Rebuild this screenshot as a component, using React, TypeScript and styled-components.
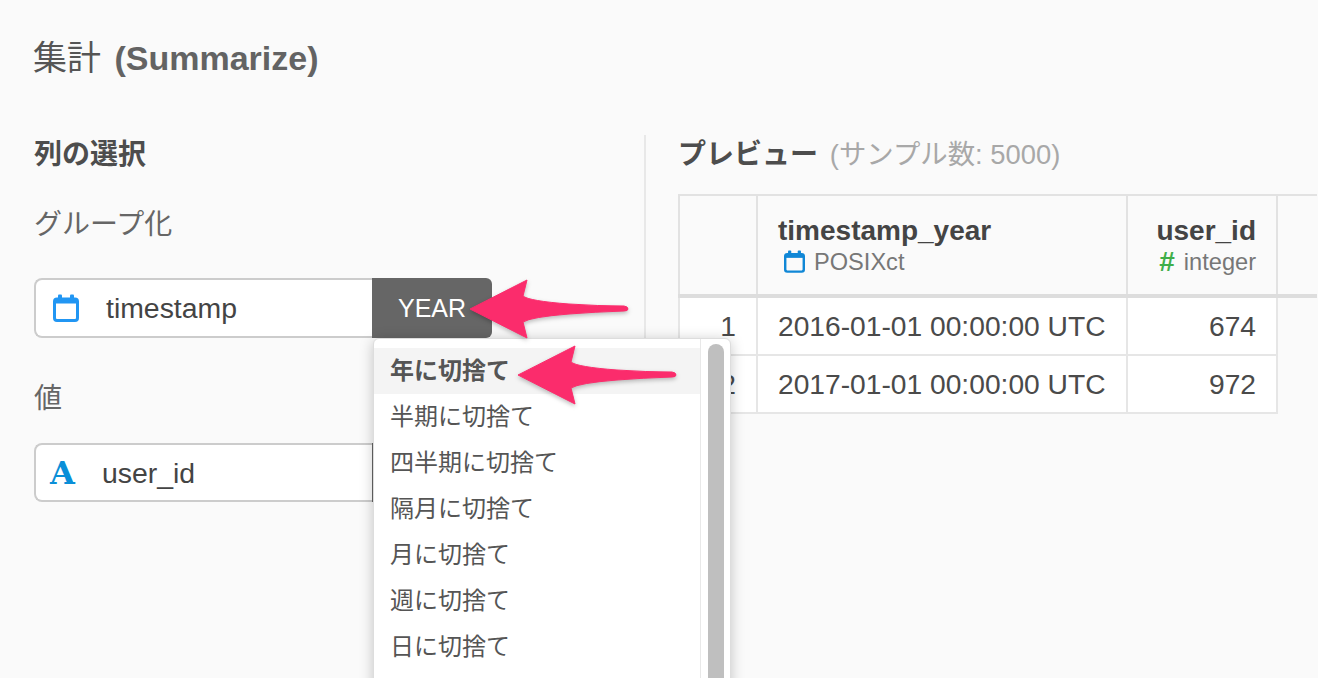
import React from 'react';
import styled, { createGlobalStyle } from 'styled-components';

const GlobalStyle = createGlobalStyle`
  html, body {
    margin: 0;
    padding: 0;
    background: #fafafa;
    font-family: 'Liberation Sans', 'Noto Sans CJK JP', sans-serif;
    color: #4a4a4a;
  }
`;

const roundings = ['年に切捨て', '半期に切捨て', '四半期に切捨て', '隔月に切捨て', '月に切捨て', '週に切捨て', '日に切捨て'];

function CalendarIcon(props: { size: number; color: string }) {
  return (
    <svg width={props.size} height={props.size + 2} viewBox="0 0 26 28" fill="none">
      <rect x="1.5" y="5" width="23" height="21.5" rx="2.5" stroke={props.color} strokeWidth="3" />
      <rect x="1.5" y="5" width="23" height="4.5" fill={props.color} />
      <rect x="5" y="0.5" width="4" height="6" rx="1" fill={props.color} />
      <rect x="17" y="0.5" width="4" height="6" rx="1" fill={props.color} />
    </svg>
  );
}

function App() {
  return (
    <Page>
      <GlobalStyle />
      <Header>
        <Title>
          集計 <strong>(Summarize)</strong>
        </Title>
      </Header>
      <Body>
        <LeftColumn>
          <SectionTitle>列の選択</SectionTitle>
          <Label $top={34}>グループ化</Label>
          <Field $top={37} $height={60} $raised>
            <FieldBox>
              <CalendarSlot>
                <CalendarIcon size={26} color="#2196f3" />
              </CalendarSlot>
              <FieldText>timestamp</FieldText>
            </FieldBox>
            <TypeButton>YEAR</TypeButton>
            <Dropdown>
              <Options>
                {roundings.map((item: string, index: number) => {
                  return (
                    <Option key={item} $active={index === 0}>
                      {item}
                    </Option>
                  );
                })}
              </Options>
              <Track>
                <Thumb />
              </Track>
            </Dropdown>
          </Field>
          <Label $top={41}>値</Label>
          <Field $top={28} $height={59}>
            <FieldBox>
              <LetterIcon>A</LetterIcon>
              <FieldText>user_id</FieldText>
            </FieldBox>
            <TypeButton />
          </Field>
        </LeftColumn>
        <RightColumn>
          <PreviewTitle>
            <strong>プレビュー</strong> <Muted>(サンプル数: 5000)</Muted>
          </PreviewTitle>
          <Table>
            <colgroup>
              <col width={78} />
              <col width={370} />
              <col width={150} />
              <col />
            </colgroup>
            <thead>
              <tr>
                <HeadCell />
                <HeadCell>
                  <ColumnName>timestamp_year</ColumnName>
                  <ColumnType>
                    <CalendarSlotSmall>
                      <CalendarIcon size={21} color="#1087d6" />
                    </CalendarSlotSmall>
                    POSIXct
                  </ColumnType>
                </HeadCell>
                <HeadCell $right>
                  <ColumnName>user_id</ColumnName>
                  <ColumnType $right>
                    <Hash>#</Hash>
                    integer
                  </ColumnType>
                </HeadCell>
                <HeadCell />
              </tr>
            </thead>
            <tbody>
              <tr>
                <BodyCell $right>1</BodyCell>
                <BodyCell>2016-01-01 00:00:00 UTC</BodyCell>
                <BodyCell $right>674</BodyCell>
              </tr>
              <tr>
                <BodyCell $right>2</BodyCell>
                <BodyCell>2017-01-01 00:00:00 UTC</BodyCell>
                <BodyCell $right>972</BodyCell>
              </tr>
            </tbody>
          </Table>
        </RightColumn>
      </Body>
      <Arrow $left={469} $top={279} />
      <Arrow $left={517} $top={345} />
    </Page>
  );
}

function Arrow(props: { $left: number; $top: number }) {
  return (
    <ArrowSvg $left={props.$left} $top={props.$top} viewBox="0 0 162 62" width={162} height={62}>
      <path
        d="M1 30 L58 1 L54 17 Q60 22 100 25 Q130 27 155 27 Q159 27.5 159 30 Q159 32 155 32 Q125 33 100 35 Q62 38 54 43 L58 59 Z"
        fill="#fb2c6c"
        stroke="#fb2c6c"
        strokeWidth="1"
        strokeLinejoin="round"
      />
    </ArrowSvg>
  );
}

const Page = styled.div`
  position: relative;
  width: 1318px;
  height: 678px;
  overflow: hidden;
  background: #fafafa;
`;

const Header = styled.div`
  height: 135px;
  box-sizing: border-box;
  padding: 38px 0 0 33px;
`;

const Title = styled.div`
  font-size: 34px;
  line-height: 40px;
  color: #555;
  strong {
    margin-left: 4px;
    font-weight: 700;
    color: #636363;
  }
`;

const Body = styled.div`
  display: flex;
`;

const LeftColumn = styled.div`
  width: 646px;
  height: 543px;
  box-sizing: border-box;
  padding-left: 34px;
  border-right: 2px solid #e8e8e8;
`;

const SectionTitle = styled.div`
  height: 36px;
  box-sizing: border-box;
  padding-top: 2px;
  font-size: 28px;
  line-height: 36px;
  font-weight: 700;
  color: #4d4d4d;
`;

const Label = styled.div<{ $top: number }>`
  margin-top: ${(props) => props.$top}px;
  height: 36px;
  box-sizing: border-box;
  padding-top: 2px;
  font-size: 28px;
  line-height: 36px;
  color: #666;
`;

const Field = styled.div<{ $top: number; $height: number; $raised?: boolean }>`
  position: relative;
  z-index: ${(props) => (props.$raised ? 2 : 1)};
  display: flex;
  width: 458px;
  height: ${(props) => props.$height}px;
  margin-top: ${(props) => props.$top}px;
`;

const FieldBox = styled.div`
  display: flex;
  align-items: center;
  width: 338px;
  box-sizing: border-box;
  background: #fff;
  border: 2px solid #ccc;
  border-right: none;
  border-radius: 8px 0 0 8px;
`;

const CalendarSlot = styled.span`
  display: flex;
  margin: 0 27px 0 17px;
`;

const CalendarSlotSmall = styled.span`
  display: flex;
  margin: -2px 0 0 6px;
`;

const LetterIcon = styled.span`
  width: 25px;
  margin: 0 27px 0 14px;
  font-family: 'DejaVu Serif', serif;
  font-size: 32px;
  font-weight: 700;
  line-height: 34px;
  color: #0a8fd8;
`;

const FieldText = styled.span`
  padding-top: 1px;
  font-size: 28.4px;
  color: #444;
`;

const TypeButton = styled.div`
  display: flex;
  align-items: center;
  justify-content: center;
  width: 120px;
  background: #666;
  border-radius: 0 6px 6px 0;
  font-size: 25px;
  color: #fff;
`;

const Dropdown = styled.div`
  position: absolute;
  left: 339px;
  top: 60px;
  display: flex;
  width: 358px;
  height: 420px;
  box-sizing: border-box;
  background: #fff;
  border: 1px solid #ddd;
  border-radius: 6px;
  box-shadow: 0 2px 14px rgba(0, 0, 0, 0.22);
`;

const Options = styled.div`
  flex: 1;
  padding-top: 9px;
`;

const Option = styled.div<{ $active: boolean }>`
  height: 46px;
  padding-left: 16px;
  font-size: 24px;
  line-height: 46px;
  color: #555;
  font-weight: ${(props) => (props.$active ? 700 : 400)};
  background: ${(props) => (props.$active ? '#f4f4f4' : '#fff')};
`;

const Track = styled.div`
  width: 30px;
  box-sizing: border-box;
  padding: 5px 6px 0 7px;
  border-left: 1px solid #e8e8e8;
`;

const Thumb = styled.div`
  height: 400px;
  background: #bfbfbf;
  border-radius: 8px;
`;

const RightColumn = styled.div`
  flex: 1;
  padding-left: 32px;
`;

const PreviewTitle = styled.div`
  height: 59px;
  padding-top: 1px;
  box-sizing: border-box;
  font-size: 28px;
  line-height: 38px;
  color: #4d4d4d;
  white-space: nowrap;
`;

const Muted = styled.span`
  margin-left: 4px;
  font-size: 27.4px;
  color: #a8a8a8;
`;

const Table = styled.table`
  width: 639px;
  table-layout: fixed;
  border-collapse: collapse;
  thead tr {
    border-bottom: 4px solid #ddd;
  }
`;

const HeadCell = styled.th<{ $right?: boolean }>`
  height: 101px;
  padding: 2px 20px 0;
  box-sizing: border-box;
  border: 2px solid #e2e2e2;
  border-bottom: none;
  text-align: ${(props) => (props.$right ? 'right' : 'left')};
  &:last-child {
    border-right: none;
  }
`;

const ColumnName = styled.div`
  font-size: 28px;
  line-height: 32px;
  font-weight: 700;
  color: #444;
`;

const ColumnType = styled.div<{ $right?: boolean }>`
  display: flex;
  align-items: center;
  justify-content: ${(props) => (props.$right ? 'flex-end' : 'flex-start')};
  gap: 9px;
  font-size: 23.6px;
  line-height: 30px;
  font-weight: 400;
  color: #777;
`;

const Hash = styled.span`
  font-weight: 700;
  color: #3fae49;
  font-size: 28px;
`;

const BodyCell = styled.td<{ $right?: boolean }>`
  height: 58.5px;
  padding: 1px 20px 0;
  box-sizing: border-box;
  background: #fff;
  border: 2px solid #e6e6e6;
  font-size: 28.2px;
  color: #4a4a4a;
  white-space: nowrap;
  text-align: ${(props) => (props.$right ? 'right' : 'left')};
`;

const ArrowSvg = styled.svg<{ $left: number; $top: number }>`
  position: absolute;
  z-index: 3;
  left: ${(props) => props.$left}px;
  top: ${(props) => props.$top}px;
  filter: drop-shadow(0 2px 2px rgba(0, 0, 0, 0.25));
`;

export default App;
